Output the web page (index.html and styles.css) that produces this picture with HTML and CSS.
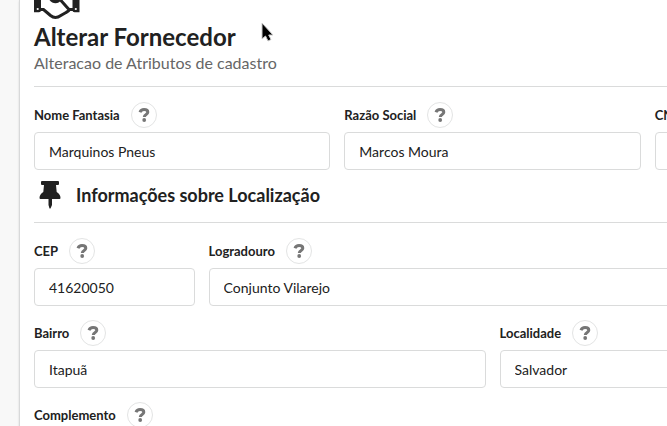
FILE: index.html
```html
<!DOCTYPE html>
<html lang="pt-BR">
<head>
<meta charset="utf-8">
<title>Alterar Fornecedor</title>
<link rel="stylesheet" href="styles.css">
</head>
<body>
<svg class="symbols" aria-hidden="true">
  <symbol id="question" viewBox="0 0 12 14">
    <path d="M2 4.300C2.700 2.300 4.200 1.600 6 1.600C8.300 1.600 9.800 2.700 9.800 4.300C9.800 6.600 6.300 6.300 6.300 9" fill="none" stroke="currentColor" stroke-width="3"/>
    <circle cx="6.200" cy="12" r="1.900" fill="currentColor"/>
  </symbol>
</svg>
<main class="segment">
  <header class="page-header">
    <svg class="handshake" viewBox="0 0 46 20" aria-hidden="true">
      <path d="M0 0H7V10.500Q7 12.300 5 12.300H0ZM38.500 0H45.500V12.300H40.500Q38.500 12.300 38.500 10.500Z" fill="currentColor"/>
      <circle cx="3.700" cy="9" r="1.100" fill="#fff"/>
      <circle cx="41.800" cy="9" r="1.100" fill="#fff"/>
      <path d="M6.500 9.500H9.500L16.500 15.500Q20 18.300 24 17L32 12.500Q34.500 11.500 35.500 9.500H39M26.500 0L35 9.500" fill="none" stroke="currentColor" stroke-width="3"/>
      <path d="M15.500 0H27Q25 3.300 21.500 3.300Q18 3.300 15.500 0Z" fill="currentColor"/>
    </svg>
    <h1>Alterar Fornecedor</h1>
    <p>Alteracao de Atributos de cadastro</p>
  </header>
  <form>
    <div class="fields thirds">
      <div class="field">
        <div class="caption"><label for="nome">Nome Fantasia</label><button type="button" class="help" aria-label="Ajuda"><svg><use href="#question"/></svg></button></div>
        <input id="nome" type="text" value="Marquinos Pneus">
      </div>
      <div class="field">
        <div class="caption"><label for="razao">Razão Social</label><button type="button" class="help" aria-label="Ajuda"><svg><use href="#question"/></svg></button></div>
        <input id="razao" type="text" value="Marcos Moura">
      </div>
      <div class="field">
        <div class="caption"><label for="cnpj">CNPJ</label></div>
        <input id="cnpj" type="text">
      </div>
    </div>
    <h2 class="section-title">
      <svg class="pin" viewBox="0 0 22 28" aria-hidden="true"><path d="M3 0H19Q20 0 20 1V3Q20 4 19 4H17L17.700 11Q21.500 13.300 21.500 17Q21.500 18 20.500 18H13V24L11.500 27.500H10.500L9.500 24V18H1.500Q.5 18 .5 17Q.5 13.300 4.300 11L5 4H3Q2 4 2 3V1Q2 0 3 0Z" fill="currentColor"/></svg>
      <span>Informações sobre Localização</span>
    </h2>
    <div class="fields">
      <div class="field three">
        <div class="caption"><label for="cep">CEP</label><button type="button" class="help" aria-label="Ajuda"><svg><use href="#question"/></svg></button></div>
        <input id="cep" type="text" value="41620050">
      </div>
      <div class="field thirteen">
        <div class="caption"><label for="logradouro">Logradouro</label><button type="button" class="help" aria-label="Ajuda"><svg><use href="#question"/></svg></button></div>
        <input id="logradouro" type="text" value="Conjunto Vilarejo">
      </div>
    </div>
    <div class="fields">
      <div class="field eight">
        <div class="caption"><label for="bairro">Bairro</label><button type="button" class="help" aria-label="Ajuda"><svg><use href="#question"/></svg></button></div>
        <input id="bairro" type="text" value="Itapuã">
      </div>
      <div class="field eight">
        <div class="caption"><label for="localidade">Localidade</label><button type="button" class="help" aria-label="Ajuda"><svg><use href="#question"/></svg></button></div>
        <input id="localidade" type="text" value="Salvador">
      </div>
    </div>
    <div class="field">
      <div class="caption"><label for="complemento">Complemento</label><button type="button" class="help" aria-label="Ajuda"><svg><use href="#question"/></svg></button></div>
      <input id="complemento" type="text">
    </div>
  </form>
  <svg class="cursor" viewBox="0 0 14 22" aria-hidden="true"><path d="M2 2V18L5.500 15L8 20L11 18.500L8.700 14H13Z" fill="#000" stroke="#ccc" stroke-width="1"/></svg>
</main>
</body>
</html>
```
FILE: styles.css
```css
* {
  box-sizing: border-box;
}

html {
  overflow: hidden;
}

body {
  margin: 0;
  padding-left: 19px;
  background: #f8f8f8;
  color: #212121;
  font-family: Lato, sans-serif;
  font-size: 14px;
  line-height: 18px;
}

.symbols {
  position: absolute;
  width: 0;
  height: 0;
}

/* The form keeps a readable minimum width and runs past narrow windows. */
.segment {
  position: relative;
  min-width: 947px;
  padding: 0 14px 14px;
  background: #fff;
  border: 1px solid #d8d9da;
  border-top: 0;
  box-shadow: 0 1px 2px rgba(34, 36, 38, 0.15);
}

.page-header {
  margin-bottom: 15px;
  padding-bottom: 14px;
  border-bottom: 1px solid #dadbdb;
}

.handshake {
  display: block;
  width: 46px;
  height: 20px;
}

h1 {
  margin: 0;
  font-size: 24px;
  line-height: 34px;
}

.page-header p {
  margin: 0;
  color: #666;
  font-size: 16px;
  line-height: 18px;
}

.fields {
  display: grid;
  grid-template-columns: repeat(16, minmax(0, 1fr));
  gap: 14px;
  margin-bottom: 14px;
}

.thirds {
  grid-template-columns: repeat(3, minmax(0, 1fr));
  margin-bottom: 0;
}

.three {
  grid-column: span 3;
}

.eight {
  grid-column: span 8;
}

.thirteen {
  grid-column: span 13;
}

.caption {
  display: flex;
  align-items: center;
  gap: 11px;
  height: 26px;
  margin-bottom: 4px;
}

label {
  font-size: 13px;
  font-weight: 700;
}

.help {
  display: grid;
  place-items: center;
  width: 26px;
  height: 26px;
  padding: 0;
  background: #fff;
  border: 1px solid #e3e4e4;
  border-radius: 50%;
  color: #767676;
}

.help svg {
  width: 12px;
  height: 14px;
}

input {
  display: block;
  width: 100%;
  height: 38px;
  padding: 0 14px;
  background: #fff;
  border: 1px solid #dadbdb;
  border-radius: 4px;
  color: #212121;
  font: inherit;
}

.section-title {
  display: flex;
  align-items: center;
  gap: 15px;
  height: 53px;
  margin: 0 0 15px;
  padding: 0 0 2px 5px;
  border-bottom: 1px solid #dadbdb;
  font-size: 18px;
  line-height: 24px;
}

.pin {
  width: 22px;
  height: 28px;
}

.cursor {
  position: absolute;
  top: 21px;
  left: 240px;
  width: 14px;
  height: 22px;
}
```
